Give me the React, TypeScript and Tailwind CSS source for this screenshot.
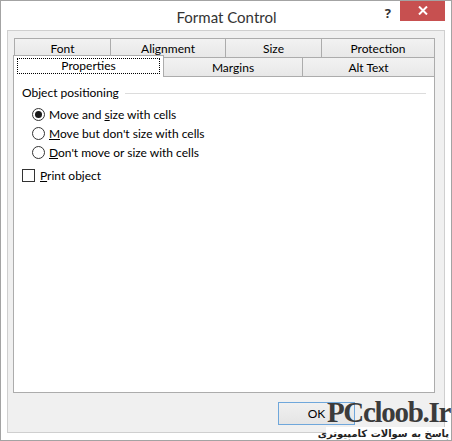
import React from "react";

const font = { fontFamily: 'Lato, "Noto Sans", sans-serif' };

function Radio({ checked }: { checked?: boolean }) {
  return (
    <span className="w-[13px] h-[13px] rounded-full border border-[#333333] bg-white flex items-center justify-center shrink-0">
      {checked && <span className="w-[7px] h-[7px] rounded-full bg-[#1a1a1a]" />}
    </span>
  );
}

export default function App() {
  return (
    <div
      className="w-[452px] h-[441px] bg-white border border-[#a3a3a3] flex flex-col relative overflow-hidden text-[12px] text-black"
      style={font}
    >
      {/* Title bar */}
      <div className="h-[29px] flex items-start relative shrink-0">
        <div className="flex-1 flex justify-center pt-[5px] text-[15px] text-[#333333] pl-[1px]">Format Control</div>
        <div className="absolute right-[6px] top-[-1px] flex items-start">
          <span className="text-[13px] font-bold text-[#333] mt-[4px] mr-[9px]" style={{ fontFamily: '"Noto Sans", sans-serif' }}>?</span>
          <div className="w-[45px] h-[21px] bg-[#c75050] flex items-center justify-center">
            <svg width="10" height="9" viewBox="0 0 10 9">
              <path d="M1 0.5 L9 8.5 M9 0.5 L1 8.5" stroke="white" strokeWidth="2" />
            </svg>
          </div>
        </div>
      </div>

      {/* Client area */}
      <div className="flex-1 mx-[6px] mb-[7px] border border-[#cfcfcf] bg-[#f0f0f0] flex flex-col pl-[5px] pt-[7px]">
        {/* Tab row 1 */}
        <div className="flex h-[19px] pl-px text-center leading-[18px]">
          <div className="w-[97px] border-t border-l border-r border-[#acacac] bg-gradient-to-b from-[#f2f2f2] to-[#e8e8e8] pt-[1px]">Font</div>
          <div className="w-[115px] border-t border-r border-[#acacac] bg-gradient-to-b from-[#f2f2f2] to-[#e8e8e8] pt-[1px]">Alignment</div>
          <div className="w-[96px] border-t border-r border-[#acacac] bg-gradient-to-b from-[#f2f2f2] to-[#e8e8e8] pt-[1px]">Size</div>
          <div className="w-[113px] border-t border-r border-[#acacac] bg-gradient-to-b from-[#f2f2f2] to-[#e8e8e8] pt-[1px]">Protection</div>
        </div>
        {/* Tab row 2 */}
        <div className="flex h-[19px] text-center leading-[18px]">
          <div className="w-[151px] h-[22px] -mt-[2px] relative z-10 border-t border-l border-r border-[#acacac] bg-white p-[2px] pl-[3px]">
            <div className="h-[16px] border border-dotted border-black leading-[14px] mr-[1px]">Properties</div>
          </div>
          <div className="w-[139px] border-t border-r border-[#acacac] bg-gradient-to-b from-[#f2f2f2] to-[#e8e8e8] pt-[1px]">Margins</div>
          <div className="w-[132px] border-t border-r border-[#acacac] bg-gradient-to-b from-[#f2f2f2] to-[#e8e8e8] pt-[1px]">Alt Text</div>
        </div>
        {/* Panel */}
        <div className="w-[422px] h-[317px] border border-[#acacac] bg-white pl-[8px] pr-[8px] pt-[8px] flex flex-col">
          <div className="flex items-center h-[15px]">
            <span className="leading-[15px]">Object positioning</span>
            <div className="flex-1 h-px bg-[#dcdcdc] ml-[6px] mt-[1px]" />
          </div>
          <div className="flex flex-col pl-[10px] mt-[5px]">
            <div className="flex items-center h-[19px] gap-[4px]">
              <Radio checked />
              <span>Move and <u>s</u>ize with cells</span>
            </div>
            <div className="flex items-center h-[19px] gap-[4px]">
              <Radio />
              <span><u>M</u>ove but don't size with cells</span>
            </div>
            <div className="flex items-center h-[19px] gap-[4px]">
              <Radio />
              <span><u>D</u>on't move or size with cells</span>
            </div>
          </div>
          <div className="flex items-center h-[19px] gap-[5px] mt-[4px]">
            <span className="w-[13px] h-[13px] border border-[#333333] bg-white shrink-0" />
            <span><u>P</u>rint object</span>
          </div>
        </div>
        {/* Buttons */}
        <div className="flex pl-[265px] pt-[9px]">
          <div className="w-[77px] h-[23px] border border-[#6fa7db] bg-gradient-to-b from-[#f0f0f0] to-[#e5e5e5] flex items-center justify-center">
            OK
          </div>
        </div>
      </div>

      {/* Watermark overlay */}
      <div className="absolute right-0 bottom-0 w-[125px] flex flex-col items-end">
        <div
          className="text-[29px] font-bold text-[#3b3b3b] leading-[29px] tracking-[-1.3px] pr-[1px]"
          style={{ fontFamily: '"Liberation Serif", serif' }}
        >
          PCcloob.Ir
        </div>
        <div
          className="w-[125px] bg-white text-[10px] font-bold text-[#222] leading-[13px] whitespace-nowrap text-right pr-[2px]"
          style={{ fontFamily: '"DejaVu Sans", "Noto Sans", sans-serif' }}
          dir="rtl"
        >
          پاسخ به سوالات کامپیوتری
        </div>
      </div>
    </div>
  );
}
